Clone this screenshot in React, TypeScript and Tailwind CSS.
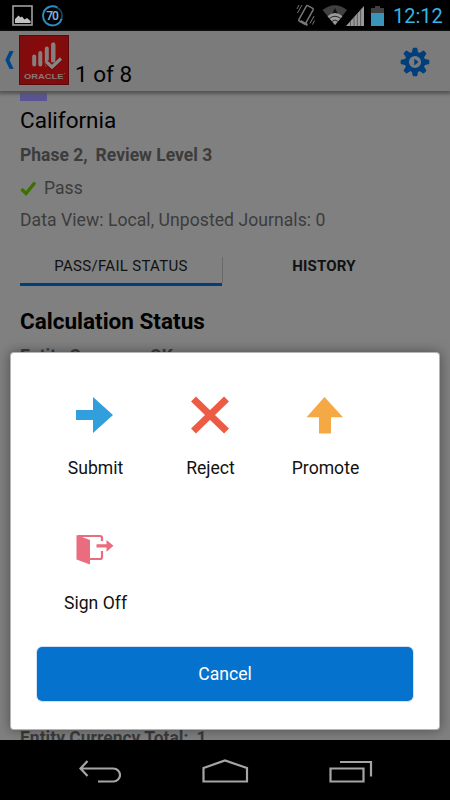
import React from "react";

function StatusBar() {
  return (
    <div className="flex h-[31px] shrink-0 items-center bg-black">
      <svg className="ml-3 h-[21px] w-[21px]" viewBox="0 0 21 21">
        <rect x="1" y="1" width="19" height="19" fill="none" stroke="#a0a0a0" strokeWidth="1.6" />
        <path d="M3 18v-4l3.500-3.500 2 2 1.500-1 2.500 3 2.500-1.500 3.500 3v2z" fill="#c2c2c2" />
      </svg>
      <svg className="ml-[8px] h-[24px] w-[24px]" viewBox="0 0 24 24">
        <circle cx="11.500" cy="12" r="9.600" fill="none" stroke="#17435c" strokeWidth="1.800" />
        <path d="M12 2.400A9.600 9.600 0 1 0 21.400 10" transform="rotate(30 12 12) translate(-.5 0)" fill="none" stroke="#2b8dc4" strokeWidth="1.800" />
        <text x="11.500" y="16" textAnchor="middle" textLength="12.500" fontFamily="Roboto, sans-serif" fontWeight="600" fontSize="12" fill="#7eb4d8">70</text>
      </svg>
      <svg className="ml-[229px] h-[25px] w-[25px]" viewBox="0 0 25 25" fill="none" stroke="#777">
        <rect x="8" y="3" width="7.700" height="17.500" rx="1" transform="rotate(29 12 12)" strokeWidth="1.500" />
        <path d="M8 2L3.500 10M5 2L3 6M20 13l-4 7.500M20.500 17.500L18.500 21.500" strokeWidth="1" />
        <path d="M6.500 18l7 4" strokeWidth="2.400" />
      </svg>
      <svg className="ml-[3px] h-[25px] w-[26px]" viewBox="0 0 26 25">
        <path d="M.5 7Q13-2.500 25 7L13 22z" fill="#404040" />
        <path d="M13 5l3 6h-6z" fill="#111" />
        <path d="M5.500 13.200Q13 7 20.500 13.200L13 22z" fill="#9b9b9b" />
        <path d="M7.300 15.500Q13 11 18.700 15.500M9.700 18.500Q13 15.500 16.300 18.500" fill="none" stroke="#262626" strokeWidth="1" />
      </svg>
      <svg className="-ml-[2px] h-[20px] w-[18px]" viewBox="0 0 18 20">
        <path d="M0 20L18 0v20z" fill="#999" />
        <path d="M4.500 15v5M8 11v9M11.300 7.500V20M14.600 4v16" stroke="#555" strokeWidth=".9" />
      </svg>
      <svg className="ml-[7px] h-[20px] w-[13px]" viewBox="0 0 13 20">
        <path d="M0 2h4V0h5v2h4v5H0z" fill="#404040" />
        <path d="M0 7h13v13H0z" fill="#3a96b9" />
      </svg>
      <span className="ml-[9px] whitespace-nowrap pt-[2px] text-[20px] leading-[29px] text-[#33b5e5]">12:12</span>
    </div>
  );
}

function OracleLogo() {
  return (
    <svg className="h-[50px] w-[50px]" viewBox="0 0 50 50">
      <defs>
        <radialGradient id="logo-red" cx="50%" cy="45%" r="70%">
          <stop offset="0" stopColor="#8e0808" />
          <stop offset="1" stopColor="#790e10" />
        </radialGradient>
      </defs>
      <rect width="50" height="50" fill="url(#logo-red)" />
      <path d="M.5 0v49.500h49V.5H0" fill="none" stroke="#620709" />
      <g stroke="#858080" strokeLinecap="round" strokeWidth="4">
        <path d="M15.200 21.500v8M21.300 18v11.500M27.800 13.500v16M34.300 9.500v18" />
      </g>
      <path d="M27.500 27l5 5 9-9" fill="none" stroke="#790b0c" strokeWidth="6" />
      <path d="M34.300 9.500v16" stroke="#858080" strokeLinecap="round" strokeWidth="4" />
      <path d="M27.500 27l5.500 5 9-8.500" fill="none" stroke="#898686" strokeWidth="3.200" />
      <text x="5" y="43.500" textLength="39.500" lengthAdjust="spacingAndGlyphs" fontFamily="Liberation Sans, sans-serif" fontWeight="700" fontSize="7.800" fill="#8b7777">ORACLE</text>
      <circle cx="45.300" cy="38.500" r=".5" fill="#8b7777" />
    </svg>
  );
}

function Gear() {
  const teeth = [0, 45, 90, 135, 180, 225, 270, 315];
  return (
    <svg className="h-[30px] w-[30px]" viewBox="-15 -15 30 30" fill="#003f7c">
      {teeth.map((a) => (
        <path key={a} d="M-3.200-9L-2.300-13.500Q-2.200-14.300-1.500-14.300H1.500Q2.200-14.300 2.300-13.500L3.200-9z" transform={`rotate(${a})`} />
      ))}
      <circle r="8.200" fill="none" stroke="#003f7c" strokeWidth="4.200" />
      <path d="M-.7-3.500L3.500 0l-4.200 3.500z" />
    </svg>
  );
}

function Header() {
  return (
    <div className="z-10 flex h-[60px] shrink-0 items-start bg-[#7b7b7b] pt-1 shadow-[0_2px_3px_1px_#555]">
      <svg className="ml-[5px] mt-[16px] h-[18px] w-[9px]" viewBox="0 0 9 18">
        <path d="M4.500 0h4.200L4.500 9l4.200 9H4.500L.3 9z" fill="#00478a" />
      </svg>
      <div className="ml-[5px]"><OracleLogo /></div>
      <span className="ml-[6px] mt-[24px] whitespace-nowrap text-[22.500px] leading-[30px] text-black">1 of 8</span>
      <div className="ml-auto mr-[20px] mt-[12px]"><Gear /></div>
    </div>
  );
}

function Action({ label, children }: { label: string; children: React.ReactNode }) {
  return (
    <button className="flex h-[135px] flex-col items-center">
      <svg className="mr-[1px] h-[38px] w-[38px]" viewBox="0 0 38 38">{children}</svg>
      <span className="mt-[22px] whitespace-nowrap text-[17.6px] leading-[24px] text-[#111]">{label}</span>
    </button>
  );
}

function ActionSheet() {
  return (
    <div className="absolute left-[11px] top-[353px] z-20 flex h-[376px] w-[428px] flex-col rounded-[3px] bg-white shadow-[0_0_0_1px_#b5b5b5,0_0_12px_2px_rgba(0,0,0,0.35)]">
      <div className="ml-[27px] mt-[43px] grid w-[345px] grid-cols-3">
        <Action label="Submit">
          <path d="M0 14h17V1l20 18-20 18V24H0z" fill="#309fdc" />
        </Action>
        <Action label="Reject">
          <path d="M2.500 3L35.500 35M35.500 3L2.500 35" stroke="#ee5b44" strokeWidth="7" />
        </Action>
        <Action label="Promote">
          <path d="M18.500 1L37 21.300H25v16.200H13V21.300H.5z" fill="#f5a945" />
        </Action>
        <Action label="Sign Off">
          <path d="M2 5h22q2 0 2 2v3M26 20v6q0 2-2 2H13" fill="none" stroke="#e96d7e" strokeWidth="2.200" />
          <path d="M.5 4l13.500 5v24.500L.5 28.500z" fill="#e96d7e" />
          <path d="M20.500 13.200h10V9L37.500 14.800l-7 6v-4.300h-10z" fill="#e96d7e" />
        </Action>
      </div>
      <button className="ml-[26px] mt-[-19px] h-[54px] w-[376px] rounded-[5px] bg-[#0572ce] text-[17.6px] text-white outline outline-[#9aaede]/40">Cancel</button>
    </div>
  );
}

function NavBar() {
  return (
    <div className="z-10 flex h-[60px] shrink-0 items-start bg-black pt-[16px]">
      <svg className="ml-[77px] h-[27px] w-[44px]" viewBox="0 0 44 27" fill="none" stroke="#a5a5a5" strokeWidth="2.200">
        <path d="M10.500 5L3.500 12.500l7 7.500M3.500 12.500h33a6.500 6.500 0 0 1 0 13H21" />
      </svg>
      <svg className="ml-[80px] h-[27px] w-[48px]" viewBox="0 0 48 27" fill="none" stroke="#a5a5a5" strokeWidth="2.200">
        <path d="M2.500 25.500V12L24 4.500 46 12v13.500z" />
      </svg>
      <svg className="ml-[79px] h-[27px] w-[46px]" viewBox="0 0 46 27" fill="none" stroke="#a5a5a5" strokeWidth="2.200">
        <path d="M2.500 12.500h33v13h-33zM12 6h31v14.500" />
      </svg>
    </div>
  );
}

export default function App() {
  return (
    <div className="relative flex h-[800px] w-[450px] flex-col overflow-hidden bg-[#808080] font-['Roboto',sans-serif]">
      <StatusBar />
      <Header />
      <main className="flex h-[649px] shrink-0 flex-col overflow-hidden whitespace-nowrap px-5 text-[17.6px] leading-[24px] text-[#3c3c3c]">
        <div className="h-[10px] w-[27px] shrink-0 bg-[#5a5494]" />
        <h1 className="mt-[4px] text-[22.500px] leading-[30px] text-black">California</h1>
        <p className="mt-[8px] text-[17.500px] font-bold">Phase 2,<span className="ml-[8px]">Review Level 3</span></p>
        <div className="mt-[9px] flex items-center">
          <svg className="h-[15px] w-[17px]" viewBox="0 0 17 15">
            <path d="M1.500 8L6 12.500 15 1.500" fill="none" stroke="#3e7000" strokeWidth="3.400" />
          </svg>
          <span className="ml-[7px]">Pass</span>
        </div>
        <p className="mt-[8px] tracking-[0.04px]">Data View: Local, Unposted Journals: 0</p>
        <div className="mt-[25px] flex h-[29px] shrink-0 text-[15px] leading-[18px] text-[#111]">
          <div className="w-[202px] border-b-[3px] border-[#003f78] text-center tracking-[0.3px]">PASS/FAIL STATUS</div>
          <div className="h-[26px] w-px bg-[#696969]" />
          <div className="w-[202px] text-center font-bold tracking-[0.2px]">HISTORY</div>
        </div>
        <h2 className="mt-[20px] text-[22.500px] font-bold leading-[30px] text-black">Calculation Status</h2>
        <p className="mt-[8px] text-[17.500px] font-bold">Entity Currency: OK</p>
        <p className="mt-auto h-[14px] text-[17.500px] font-bold">Entity Currency Total:<span className="ml-[8px]">1</span></p>
      </main>
      <NavBar />
      <ActionSheet />
    </div>
  );
}
